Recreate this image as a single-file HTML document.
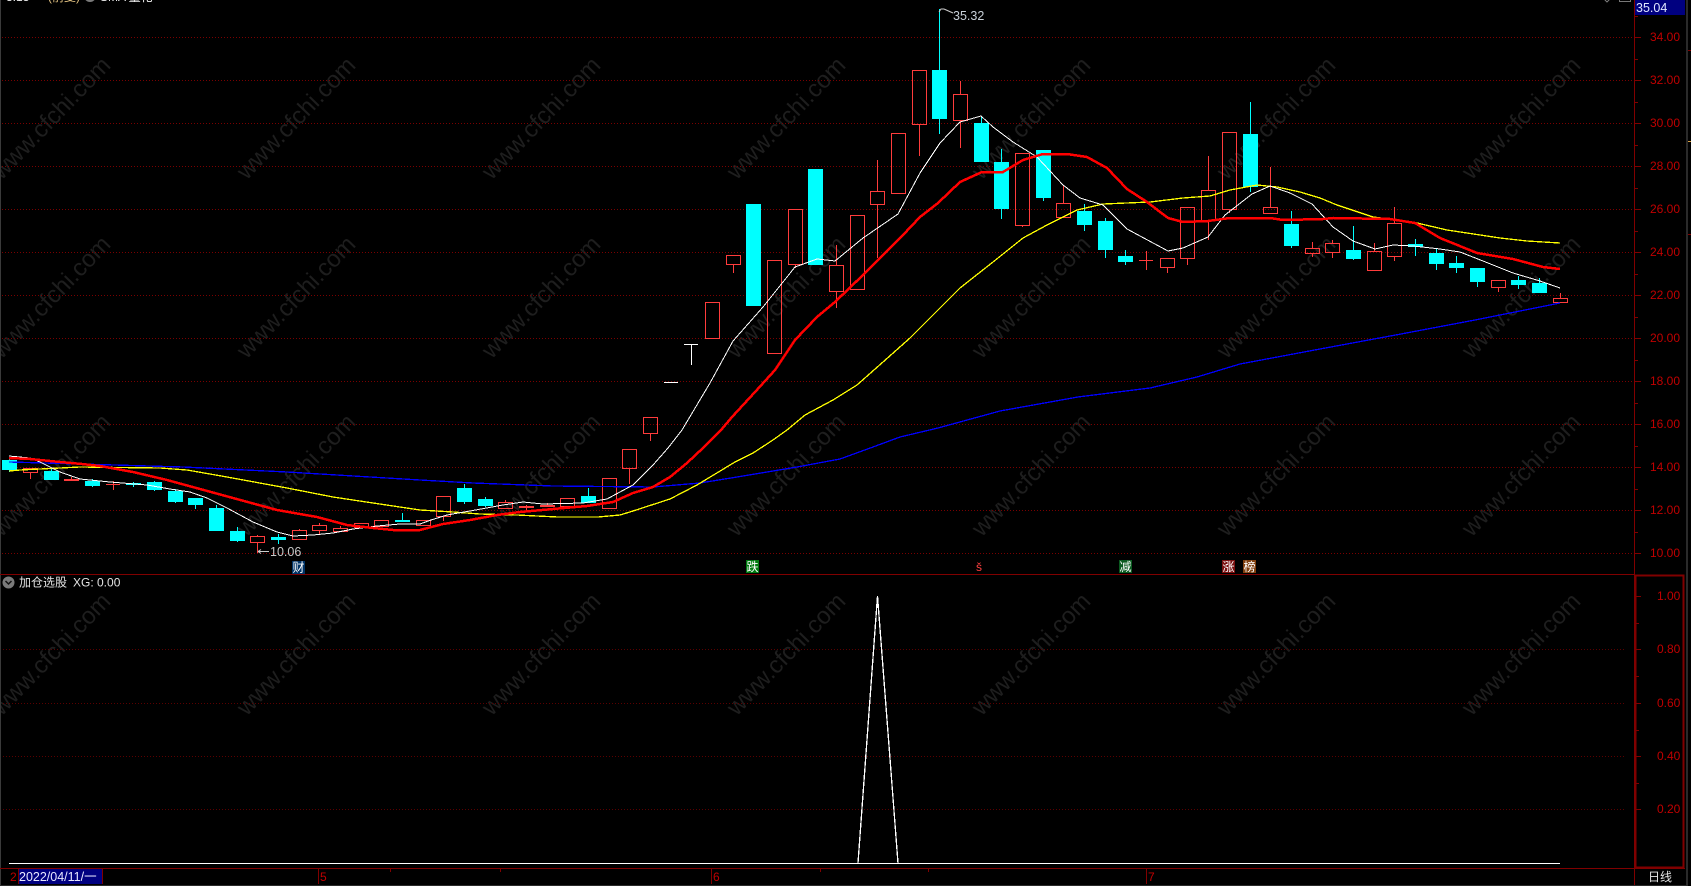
<!DOCTYPE html>
<html><head><meta charset="utf-8"><title>K线</title>
<style>
html,body{margin:0;padding:0;background:#000;width:1691px;height:886px;overflow:hidden}
svg{display:block;font-family:"Liberation Sans","Noto Sans CJK SC",sans-serif}
</style></head><body>
<svg width="1691" height="886" viewBox="0 0 1691 886" xmlns="http://www.w3.org/2000/svg">
<rect width="1691" height="886" fill="#000"/>
<!-- watermarks -->
<g fill="#1e1e1e" font-size="24" text-anchor="middle">
<text transform="translate(51,118) rotate(-46)" y="8">www.cfchi.com</text><text transform="translate(296,118) rotate(-46)" y="8">www.cfchi.com</text><text transform="translate(541,118) rotate(-46)" y="8">www.cfchi.com</text><text transform="translate(786,118) rotate(-46)" y="8">www.cfchi.com</text><text transform="translate(1031,118) rotate(-46)" y="8">www.cfchi.com</text><text transform="translate(1276,118) rotate(-46)" y="8">www.cfchi.com</text><text transform="translate(1521,118) rotate(-46)" y="8">www.cfchi.com</text>
<text transform="translate(51,297) rotate(-46)" y="8">www.cfchi.com</text><text transform="translate(296,297) rotate(-46)" y="8">www.cfchi.com</text><text transform="translate(541,297) rotate(-46)" y="8">www.cfchi.com</text><text transform="translate(786,297) rotate(-46)" y="8">www.cfchi.com</text><text transform="translate(1031,297) rotate(-46)" y="8">www.cfchi.com</text><text transform="translate(1276,297) rotate(-46)" y="8">www.cfchi.com</text><text transform="translate(1521,297) rotate(-46)" y="8">www.cfchi.com</text>
<text transform="translate(51,475) rotate(-46)" y="8">www.cfchi.com</text><text transform="translate(296,475) rotate(-46)" y="8">www.cfchi.com</text><text transform="translate(541,475) rotate(-46)" y="8">www.cfchi.com</text><text transform="translate(786,475) rotate(-46)" y="8">www.cfchi.com</text><text transform="translate(1031,475) rotate(-46)" y="8">www.cfchi.com</text><text transform="translate(1276,475) rotate(-46)" y="8">www.cfchi.com</text><text transform="translate(1521,475) rotate(-46)" y="8">www.cfchi.com</text>
<text transform="translate(51,654) rotate(-46)" y="8">www.cfchi.com</text><text transform="translate(296,654) rotate(-46)" y="8">www.cfchi.com</text><text transform="translate(541,654) rotate(-46)" y="8">www.cfchi.com</text><text transform="translate(786,654) rotate(-46)" y="8">www.cfchi.com</text><text transform="translate(1031,654) rotate(-46)" y="8">www.cfchi.com</text><text transform="translate(1276,654) rotate(-46)" y="8">www.cfchi.com</text><text transform="translate(1521,654) rotate(-46)" y="8">www.cfchi.com</text>
</g>
<!-- grid -->
<g shape-rendering="crispEdges">
<path d="M2 37.5H1634M2 80.5H1634M2 123.5H1634M2 166.5H1634M2 209.5H1634M2 252.5H1634M2 295.5H1634M2 338.5H1634M2 381.5H1634M2 424.5H1634M2 467.5H1634M2 510.5H1634M2 553.5H1634" stroke="#7a0000" stroke-dasharray="1 2" fill="none"/>
<path d="M3 649.5H1625M3 703.5H1625M3 756.5H1625M3 809.5H1625" stroke="#5a0000" stroke-dasharray="1 2" fill="none"/>
<!-- frame -->
<rect x="0" y="0" width="1" height="886" fill="#3a3a3a"/>
<rect x="1686" y="0" width="2" height="886" fill="#2a2a2a"/>
<rect x="0" y="574" width="1635" height="1" fill="#800000"/>
<rect x="0" y="868" width="1635" height="1" fill="#800000"/>
<rect x="1634" y="0" width="1" height="886" fill="#800000"/>
<rect x="1635.5" y="575.5" width="48" height="292" fill="none" stroke="#800000" stroke-width="2"/>
<rect x="1635" y="868" width="50" height="1" fill="#800000"/>
<rect x="0" y="885" width="1686" height="1" fill="#2a2a2a"/>
<!-- axis ticks -->
<path d="M1635 37.5h6M1635 80.5h6M1635 123.5h6M1635 166.5h6M1635 209.5h6M1635 252.5h6M1635 295.5h6M1635 338.5h6M1635 381.5h6M1635 424.5h6M1635 467.5h6M1635 510.5h6M1635 553.5h6M1635 16.5h3M1635 59.5h3M1635 102.5h3M1635 145.5h3M1635 188.5h3M1635 231.5h3M1635 274.5h3M1635 317.5h3M1635 360.5h3M1635 403.5h3M1635 446.5h3M1635 489.5h3M1635 532.5h3" stroke="#800000" fill="none"/>
<path d="M1636 596.5h5M1636 649.5h5M1636 703.5h5M1636 756.5h5M1636 809.5h5M1636 623.5h3M1636 676.5h3M1636 730.5h3M1636 783.5h3" stroke="#800000" fill="none"/>
<path d="M1688 50.5h3M1688 234.5h3" stroke="#800000" fill="none"/>
<path d="M1688 141.5h3" stroke="#d9a040" fill="none"/>
<path d="M18.5 869V884M102.5 869V884M318.5 869V884M711.5 869V884M1146.5 869V884M1634.5 869V884M820.5 869v3M928.5 869v3M390.5 869v3M500.5 869v3" stroke="#800000" fill="none"/>
<!-- top right bits -->
<rect x="1635" y="0" width="50" height="15" fill="#000080"/>
<path d="M1605 0l2 2 2-2" stroke="#777" fill="none"/>
<path d="M1619.5 0v1.5h11V0" stroke="#777" fill="none"/>
<!-- cyan candles -->
<path fill="#00ffff" d="M2 460h15v10H2zM44 471h15v9H44zM85 481h15v5H85zM126 483h15v2h-15zM147 482h15v8h-15zM168 491h15v11h-15zM188 498h15v7h-15zM209 508h15v23h-15zM230 531h15v10h-15zM271 537h15v3h-15zM395 520h15v2h-15zM457 488h15v14h-15zM478 499h15v7h-15zM581 496h15v7h-15zM746 204h15v102h-15zM808 169h15v96h-15zM932 70h15v49h-15zM974 123h15v39h-15zM994 162h15v47h-15zM1036 150h15v48h-15zM1077 211h15v14h-15zM1098 221h15v29h-15zM1118 256h15v6h-15zM1243 134h15v53h-15zM1284 224h15v22h-15zM1346 250h15v9h-15zM1408 244h15v3h-15zM1429 253h15v11h-15zM1449 263h15v5h-15zM1470 268h15v14h-15zM1511 280h15v5h-15zM1532 283h15v10h-15z"/>
<path stroke="#00ffff" fill="none" d="M9.5 458v14M51.5 468v4M92.5 479v8M133.5 482v5M154.5 481v10M175.5 489v14M195.5 505v4M216.5 505v3M237.5 527v15M278.5 534v10M402.5 513v9M464.5 484v20M485.5 497v10M588.5 488v8M939.5 9v125M981.5 117v6M1001.5 149v70M1043.5 198v3M1084.5 204v27M1105.5 218v40M1125.5 250v15M1250.5 102v90M1291.5 211v37M1353.5 226v34M1415.5 239v17M1436.5 248v22M1456.5 256v17M1477.5 282v5M1518.5 276v13M1539.5 278v5"/>
<!-- red candles -->
<path fill="none" stroke="#ff3c3c" d="M23.5 468.5h14v4h-14zM250.5 536.5h14v6h-14zM292.5 530.5h14v9h-14zM312.5 525.5h14v5h-14zM333.5 528.5h14v3h-14zM354.5 523.5h14v4h-14zM374.5 520.5h14v6h-14zM416.5 520.5h14v5h-14zM436.5 496.5h14v20h-14zM498.5 502.5h14v6h-14zM560.5 498.5h14v8h-14zM602.5 478.5h14v30h-14zM622.5 449.5h14v19h-14zM643.5 417.5h14v16h-14zM705.5 302.5h14v36h-14zM726.5 255.5h14v9h-14zM767.5 260.5h14v93h-14zM788.5 209.5h14v55h-14zM829.5 265.5h14v26h-14zM850.5 215.5h14v74h-14zM870.5 191.5h14v13h-14zM891.5 133.5h14v60h-14zM912.5 70.5h14v54h-14zM953.5 94.5h14v26h-14zM1015.5 153.5h14v72h-14zM1056.5 203.5h14v14h-14zM1160.5 258.5h14v9h-14zM1180.5 207.5h14v51h-14zM1201.5 190.5h14v30h-14zM1222.5 132.5h14v77h-14zM1263.5 207.5h14v6h-14zM1305.5 248.5h14v5h-14zM1325.5 243.5h14v9h-14zM1367.5 251.5h14v19h-14zM1387.5 223.5h14v33h-14zM1491.5 280.5h14v7h-14zM1553.5 298.5h14v4h-14z"/>
<path fill="none" stroke="#ff3c3c" d="M30.5 473v6M71.5 477v3M113.5 481v9M106 484.5h14M1146.5 251v19M1139 260.5h14M257.5 535v1M257.5 543v10M299.5 529v1M319.5 523v2M319.5 531v4M340.5 526v2M443.5 517v4M505.5 500v2M526.5 505v5M547.5 503v3M629.5 469v15M650.5 434v7M733.5 265v8M795.5 265v3M836.5 245v20M836.5 292v16M877.5 160v31M877.5 205v53M919.5 125v31M960.5 81v13M960.5 121v27M1022.5 226v1M1063.5 186v17M1167.5 268v5M1187.5 259v6M1208.5 156v34M1208.5 221v19M1229.5 210v3M1270.5 167v40M1312.5 242v6M1312.5 254v3M1332.5 240v3M1332.5 253v5M1374.5 243v8M1394.5 207v16M1394.5 257v4M1498.5 288v4M1560.5 293v5"/>
<path fill="#ff3c3c" d="M64 479h15v2H64zM519 506h15v2h-15zM540 505h15v2h-15z"/>
<!-- white doji -->
<path fill="none" stroke="#fff" d="M664 382.5h14M684 344.5h14M691.5 345v20"/>
</g>
<!-- moving averages -->
<g shape-rendering="crispEdges" fill="none">
<polyline stroke="#0000ff" stroke-width="1.3" points="9,462 80,464 183,467 287,472 420,480 473,483 553,486 653,487 700,483 737,477 797,467 840,459 873,447 900,437 938,428 1000,411 1078,397 1150,388 1197,377 1240,364 1320,349 1401,334 1475,320 1560,303"/>
<polyline stroke="#ffff00" stroke-width="1.3" points="9,471 20,470 80,467 160,468 187,470 227,477 287,488 333,497 373,503 420,510 453,512 480,514 517,515 537,516 558,517 598,517 620,515 633,511 670,499 697,485 735,462 753,453 773,440 787,430 805,415 833,400 857,385 883,362 910,338 960,288 993,262 1023,238 1047,225 1077,210 1103,204 1150,202 1183,198 1210,196 1230,190 1257,185 1277,187 1300,192 1320,198 1337,205 1373,217 1390,219 1417,223 1447,230 1500,238 1527,241 1560,243"/>
<polyline stroke="#ffffff" stroke-width="1" points="9,456 30,458 40,462 60,472 80,479 110,482 147,485 170,489 190,492 207,498 227,508 253,522 277,532 293,536 313,535 333,533 353,529 377,526 400,524 420,524 431,520 447,515 470,511 503,505 523,502 543,504 583,503 607,499 633,485 653,465 668,448 682,430 710,383 733,341 763,307 783,282 795,267 817,259 835,261 863,238 898,214 920,173 940,143 960,122 981,116 993,127 1013,142 1037,157 1063,185 1080,198 1103,205 1127,229 1168,251 1183,248 1208,237 1225,215 1252,194 1270,186 1290,193 1312,204 1333,227 1353,241 1375,249 1393,245 1413,246 1440,249 1460,252 1483,261 1513,273 1540,281 1560,288"/>
<polyline stroke="#ff0000" stroke-width="2.5" points="9,458 30,459 40,460 60,462 82,464 100,466 133,472 167,480 200,489 233,498 277,510 317,517 347,525 373,528 393,530 420,530 443,524 470,520 497,515 520,512 553,509 587,506 613,502 633,493 653,487 670,477 687,463 703,448 721,430 732,417 755,392 775,370 795,340 817,317 835,302 863,275 903,235 920,217 938,203 960,182 982,172 1003,172 1023,160 1043,154 1067,154 1087,157 1107,168 1127,189 1147,202 1168,218 1183,222 1208,221 1230,218 1270,218 1283,220 1323,219 1333,218 1390,219 1415,223 1440,238 1477,253 1513,259 1543,267 1560,269"/>
</g>
<!-- high / low labels -->
<path d="M939 12l2-3h3M944 9l9 4" fill="none" stroke="#ccc"/>
<text x="953" y="20" font-size="12.5" fill="#c8d0d8">35.32</text>
<path d="M258 551.5h11M258 551.5l3-2M258 551.5l3 2" fill="none" stroke="#ccc"/>
<text x="270" y="556" font-size="12.5" fill="#c8c8c8">10.06</text>
<!-- event markers -->
<rect x="292" y="561" width="13" height="13" fill="#003366"/>
<text x="292.5" y="571.5" font-size="12" fill="#fff">财</text>
<rect x="746" y="560" width="13" height="13" fill="#007a10"/>
<text x="746.5" y="571" font-size="12" fill="#fff">跌</text>
<text x="976" y="571" font-size="12" fill="#ff4040">š</text>
<rect x="1119" y="560" width="13" height="13" fill="#0b5a20"/>
<text x="1119.5" y="571" font-size="12" fill="#fff">减</text>
<rect x="1222" y="560" width="13" height="13" fill="#7a1010"/>
<text x="1222.5" y="571" font-size="12" fill="#fff">涨</text>
<rect x="1243" y="560" width="13" height="13" fill="#804010"/>
<text x="1243.5" y="571" font-size="12" fill="#fff">榜</text>
<!-- indicator header -->
<circle cx="8.5" cy="582.5" r="6" fill="#7a7a7a"/>
<path d="M5.5 581l3 3 3-3" fill="none" stroke="#111" stroke-width="1.5"/>
<text x="19" y="586.5" font-size="12" fill="#e4e4e4">加仓选股</text>
<text x="73" y="586.5" font-size="12" fill="#e4e4e4">XG: 0.00</text>
<!-- indicator line -->
<polyline fill="none" stroke="#ffffff" stroke-width="1.3" shape-rendering="crispEdges" points="858,863 877.5,596 898,863"/>
<rect x="9" y="863" width="1551" height="1" fill="#fff"/>
<!-- axis labels -->
<g font-size="12" fill="#c00000">
<text x="1650" y="41">34.00</text><text x="1650" y="84">32.00</text><text x="1650" y="127">30.00</text><text x="1650" y="170">28.00</text><text x="1650" y="213">26.00</text><text x="1650" y="256">24.00</text><text x="1650" y="299">22.00</text><text x="1650" y="342">20.00</text><text x="1650" y="385">18.00</text><text x="1650" y="428">16.00</text><text x="1650" y="471">14.00</text><text x="1650" y="514">12.00</text><text x="1650" y="557">10.00</text>
<text x="1657" y="600">1.00</text><text x="1657" y="653">0.80</text><text x="1657" y="707">0.60</text><text x="1657" y="760">0.40</text><text x="1657" y="813">0.20</text>
<text x="10" y="881">2</text><text x="320" y="881">5</text><text x="713" y="881">6</text><text x="1148" y="881">7</text>
</g>
<text x="1636" y="12" font-size="12.5" fill="#dfe6ff">35.04</text>
<rect x="19" y="869" width="83" height="15" fill="#000080"/>
<text x="19" y="881" font-size="12.5" fill="#e8e8ff">2022/04/11/一</text>
<text x="1648" y="881" font-size="12" fill="#e4e4e4">日线</text>
<!-- clipped top text -->
<text x="6" y="1" font-size="12" fill="#f0f0f0">3.13</text>
<text x="48" y="1" font-size="12" fill="#e0c080">(前复)</text>
<circle cx="90" cy="-4" r="6" fill="#7a7a7a"/>
<text x="100" y="1" font-size="12" fill="#f0f0f0">SMA 量化</text>
</svg>
</body></html>
